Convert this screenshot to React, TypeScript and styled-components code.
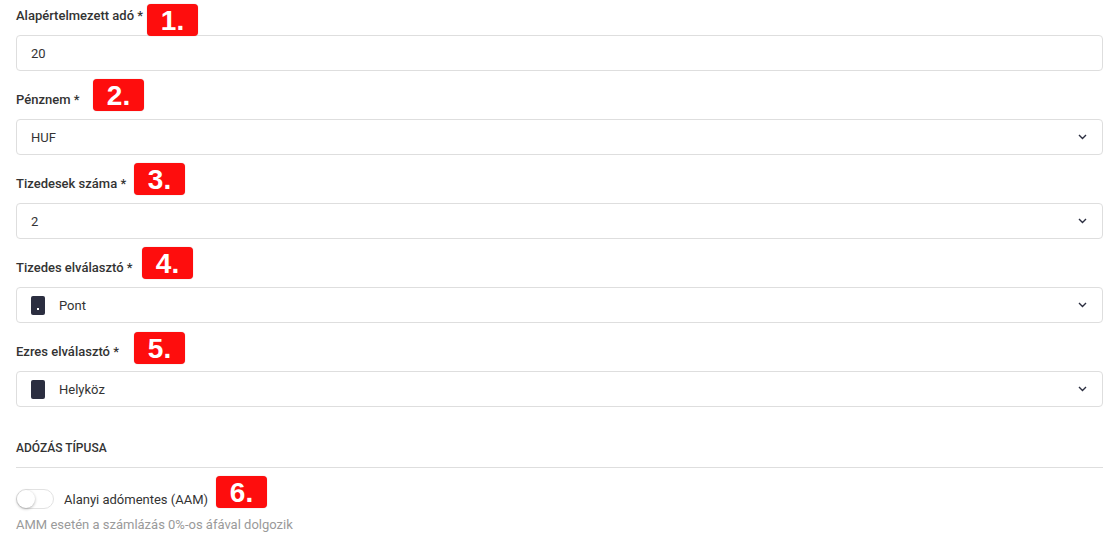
import React from "react";
import styled, { createGlobalStyle } from "styled-components";

const GlobalStyle = createGlobalStyle`
  html, body { margin: 0; padding: 0; background: #ffffff; }
  body { font-family: Roboto, "Noto Sans", Arial, sans-serif; color: #333; }
  * { box-sizing: border-box; }
`;

const Page = styled.div`
  width: 1114px;
  height: 546px;
  padding: 8px 11px 0 16px;
  overflow: hidden;
`;

const Field = styled.div`
  position: relative;
  margin-bottom: 21px;
`;

const Label = styled.div`
  font-size: 13px;
  line-height: 16px;
  font-weight: 500;
  color: #333;
  margin-bottom: 11px;
`;

const Box = styled.div`
  height: 36px;
  border: 1px solid #dedede;
  border-radius: 4px;
  background: #fff;
  display: flex;
  align-items: center;
  padding: 0 15px 0 14px;
  font-size: 13px;
  color: #333;
`;

const Value = styled.span`
  flex: 1;
`;

const Swatch = styled.span<{ $dot?: boolean }>`
  position: relative;
  width: 14px;
  height: 19px;
  border-radius: 2px;
  background: #2b2e40;
  margin-right: 14px;
  flex: none;
  &::after {
    content: "";
    display: ${(p) => (p.$dot ? "block" : "none")};
    position: absolute;
    left: 6px;
    bottom: 5px;
    width: 2px;
    height: 2px;
    background: #fff;
  }
`;

const Badge = styled.div<{ $left: number; $top: number }>`
  position: absolute;
  left: ${(p) => p.$left}px;
  top: ${(p) => p.$top}px;
  width: 51px;
  height: 32px;
  border-radius: 4px;
  background: #fe0d0d;
  color: #fff;
  font-family: "Liberation Sans", Arial, sans-serif;
  font-weight: 700;
  font-size: 28px;
  line-height: 33px;
  text-align: center;
  box-shadow: 0 0 1px rgba(120, 0, 0, 0.4);
`;

const Section = styled.div`
  margin-top: 33px;
  font-size: 12px;
  line-height: 16px;
  font-weight: 500;
  text-transform: uppercase;
  color: #333;
  padding-bottom: 11px;
  border-bottom: 1px solid #dedede;
`;

const ToggleRow = styled.div`
  position: relative;
  display: flex;
  align-items: center;
  margin-top: 21px;
  height: 20px;
  font-size: 13px;
  color: #333;
`;

const Track = styled.span`
  position: relative;
  width: 38px;
  height: 20px;
  border: 1px solid #e2e2e2;
  border-radius: 10px;
  background: #fff;
  margin-right: 10px;
  flex: none;
`;

const Knob = styled.span`
  position: absolute;
  left: 0px;
  top: 0px;
  width: 18px;
  height: 18px;
  border-radius: 50%;
  background: #fff;
  box-shadow: 0 1px 3px rgba(0, 0, 0, 0.3);
`;

const Hint = styled.div`
  margin-top: 8px;
  font-size: 13px;
  line-height: 16px;
  color: #9a9a9a;
`;

const Chevron = () => (
  <svg width="9" height="6" viewBox="0 0 9 6" fill="none">
    <polyline points="1,1 4.5,4.5 8,1" stroke="#2b2e40" strokeWidth="1.4" />
  </svg>
);

type F = {
  label: string;
  value: string;
  select?: boolean;
  swatch?: "dot" | "plain";
  badge: string;
  left: number;
  top: number;
};

const fields: F[] = [
  { label: "Alapértelmezett adó *", value: "20", badge: "1.", left: 131, top: -4 },
  { label: "Pénznem *", value: "HUF", select: true, badge: "2.", left: 77, top: -13 },
  { label: "Tizedesek száma *", value: "2", select: true, badge: "3.", left: 118, top: -13 },
  { label: "Tizedes elválasztó *", value: "Pont", select: true, swatch: "dot", badge: "4.", left: 126, top: -13 },
  { label: "Ezres elválasztó *", value: "Helyköz", select: true, swatch: "plain", badge: "5.", left: 118, top: -12 },
];

export default function App() {
  return (
    <>
      <GlobalStyle />
      <Page>
        {fields.map((f) => (
          <Field key={f.label}>
            <Label>{f.label}</Label>
            <Box>
              {f.swatch && <Swatch $dot={f.swatch === "dot"} />}
              <Value>{f.value}</Value>
              {f.select && <Chevron />}
            </Box>
            <Badge $left={f.left} $top={f.top}>{f.badge}</Badge>
          </Field>
        ))}
        <Section>Adózás típusa</Section>
        <ToggleRow>
          <Track>
            <Knob />
          </Track>
          Alanyi adómentes (AAM)
          <Badge $left={200} $top={-13}>6.</Badge>
        </ToggleRow>
        <Hint>AMM esetén a számlázás 0%-os áfával dolgozik</Hint>
      </Page>
    </>
  );
}
